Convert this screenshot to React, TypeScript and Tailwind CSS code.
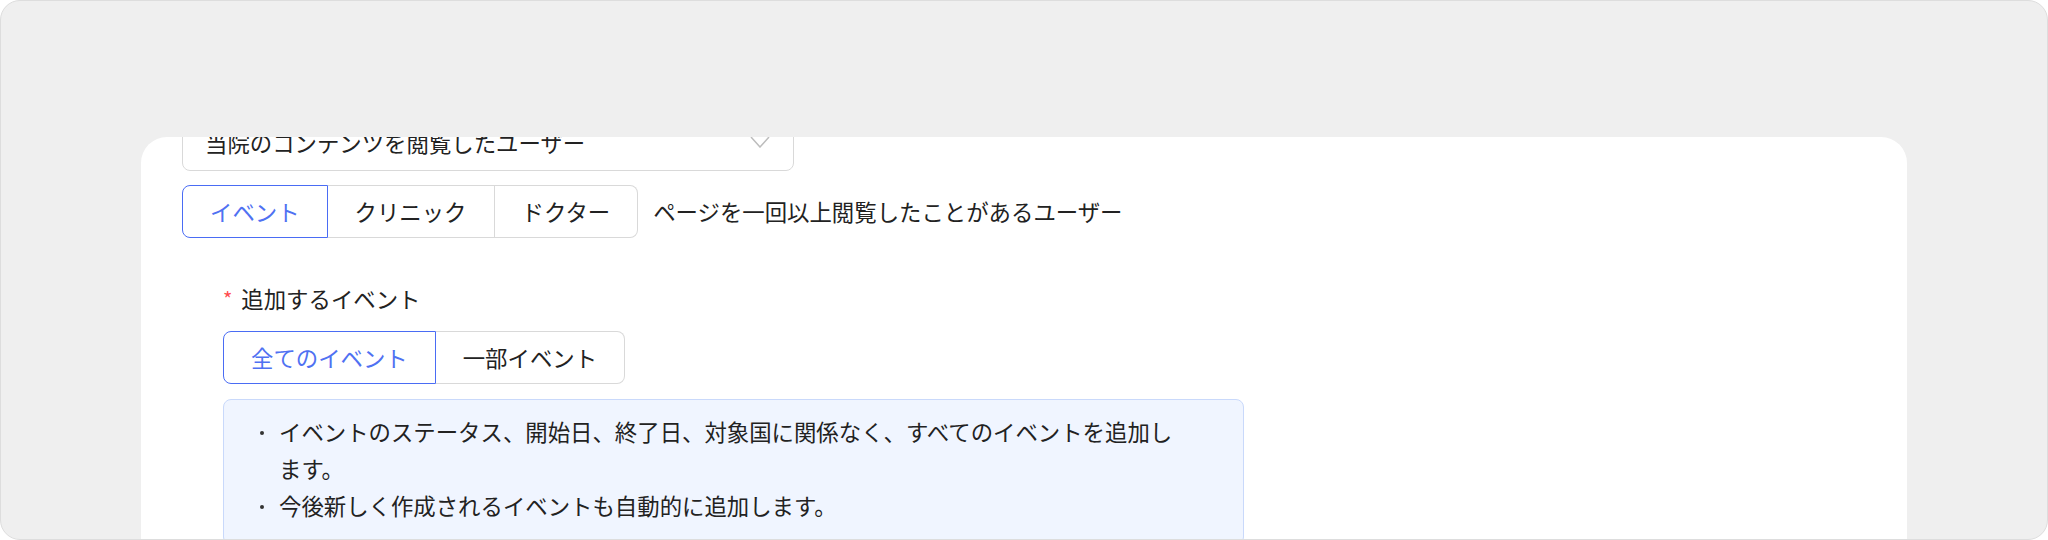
import { useState } from "react";

const FONT = "font-['Noto_Sans_CJK_JP','Noto_Sans',sans-serif]";

const TargetTabs = ({ items, active, onChange }: { items: string[]; active: number; onChange: (i: number) => void }) => (
  <div className="flex">
    {items.map((label, i) => {
      const isActive = i === active;
      const first = i === 0;
      const last = i === items.length - 1;
      return (
        <button
          key={label}
          type="button"
          onClick={() => onChange(i)}
          className={[
            "h-[53px] px-[27px] text-[22.4px] leading-none whitespace-nowrap bg-white",
            first ? "rounded-l-[8px]" : "",
            last ? "rounded-r-[8px]" : "",
            isActive
              ? "border border-[#4a6cf4] text-[#4f71f2]"
              : first
              ? "border border-[#d9d9d9] text-[#222]"
              : "border-y border-r border-[#d9d9d9] text-[#222]",
          ].join(" ")}
        >
          {label}
        </button>
      );
    })}
  </div>
);

const App = () => {
  const [target, setTarget] = useState(0);
  const [scope, setScope] = useState(0);

  return (
    <div className={`h-[540px] w-full overflow-hidden rounded-[20px] border border-[#dddddd] bg-[#efefef] flex flex-col ${FONT}`}>
      <div className="mt-[136px] mx-[140px] flex-1 overflow-hidden rounded-t-[26px] bg-white px-[41px]">
        {/* Audience select (scrolled partly out of view) */}
        <div className="-mt-[19px] flex h-[53px] w-[612px] items-center justify-between rounded-[8px] border border-[#d9d9d9] pl-[22px] pr-[23px]">
          <span className="mb-[4px] text-[22.4px] text-[#222]">当院のコンテンツを閲覧したユーザー</span>
          <svg width="20" height="12" viewBox="0 0 20 12" fill="none" className="mb-[6px]">
            <path d="M1 1L10 11L19 1" stroke="#bdbdbd" strokeWidth="1.5" />
          </svg>
        </div>

        {/* Target type */}
        <div className="mt-[14px] flex items-center">
          <TargetTabs items={["イベント", "クリニック", "ドクター"]} active={target} onChange={setTarget} />
          <span className="ml-[15px] text-[22.4px] text-[#222]">ページを一回以上閲覧したことがあるユーザー</span>
        </div>

        {/* Events to add */}
        <div className="pl-[41px]">
          <div className="mt-[42px] flex h-[37px] items-center">
            <span className="mr-[9px] text-[20px] text-[#ff4d4f]">*</span>
            <span className="text-[22.4px] text-[#222]">追加するイベント</span>
          </div>
          <div className="mt-[14px]">
            <TargetTabs items={["全てのイベント", "一部イベント"]} active={scope} onChange={setScope} />
          </div>

          <div className="mt-[15px] w-[1021px] rounded-[8px] border border-[#c9d9fb] bg-[#f0f5ff] pt-[13px] pb-[20px]">
            <ul className="text-[22.4px] leading-[37px] text-[#222]">
              <li className="flex">
                <span className="ml-[36px] mr-[15px] mt-[18px] h-[4px] w-[4px] shrink-0 rounded-full bg-[#333]" />
                <span className="max-w-[905px]">イベントのステータス、開始日、終了日、対象国に関係なく、すべてのイベントを追加します。</span>
              </li>
              <li className="flex">
                <span className="ml-[36px] mr-[15px] mt-[18px] h-[4px] w-[4px] shrink-0 rounded-full bg-[#333]" />
                <span>今後新しく作成されるイベントも自動的に追加します。</span>
              </li>
            </ul>
          </div>
        </div>
      </div>
    </div>
  );
};

export default App;
